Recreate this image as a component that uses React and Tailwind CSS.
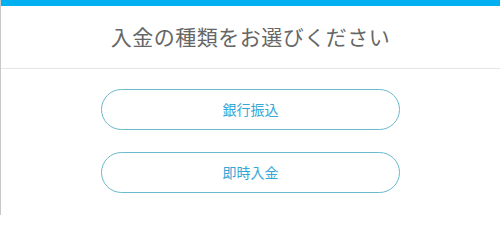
export default function App() {
  const options = ['銀行振込', '即時入金'];
  return (
    <div className="w-[500px] h-[215px] bg-white border-l border-[#c8c8c8] overflow-hidden" style={{ fontFamily: '"Noto Sans CJK JP", "Noto Sans", sans-serif' }}>
      <div className="h-[6px] bg-[#00b0f0]" />
      <div className="h-[63px] flex items-center justify-center border-b border-[#e6e6e6]">
        <h1 className="text-[21px] text-[#666666] tracking-[0.5px]">入金の種類をお選びください</h1>
      </div>
      <div className="flex flex-col items-center gap-[22px] pt-[20px]">
        {options.map(label => (
          <button
            key={label}
            className="w-[299px] h-[41px] rounded-full border-[1.5px] border-[#6cb8cc] bg-white text-[14px] text-[#35a8d6] flex items-center justify-center"
          >
            {label}
          </button>
        ))}
      </div>
    </div>
  );
}
